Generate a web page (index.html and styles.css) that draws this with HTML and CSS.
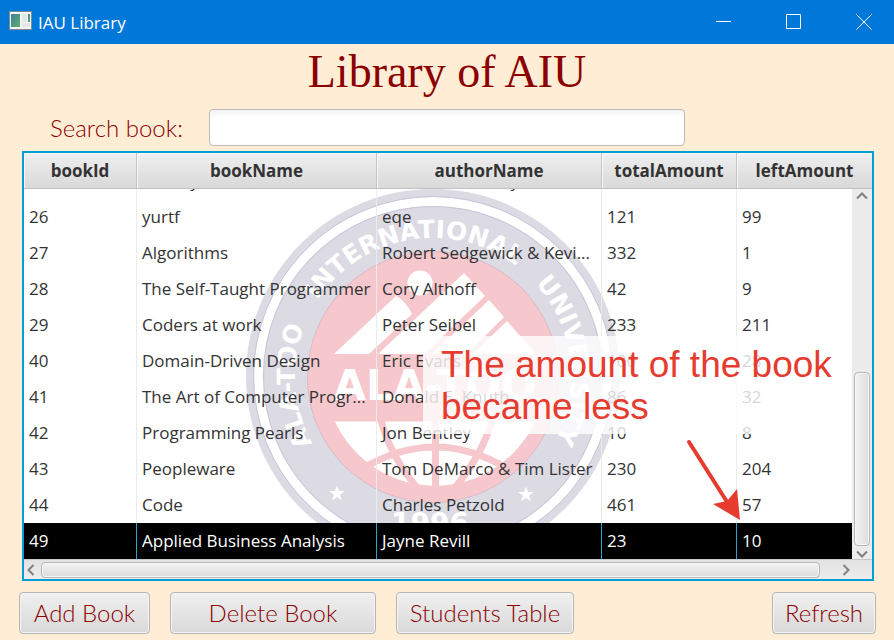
FILE: index.html
```html
<!DOCTYPE html>
<html lang="en">
<head>
<meta charset="utf-8">
<title>IAU Library</title>
<link rel="stylesheet" href="styles.css">
</head>
<body>
<div class="window">
  <header class="titlebar">
    <svg class="app-icon" width="23" height="19" viewBox="0 0 23 19" aria-hidden="true">
      <defs><linearGradient id="pane" x1="0" y1="0" x2="1" y2="1"><stop offset="0" stop-color="#3f7f9c"/><stop offset="1" stop-color="#5fb06c"/></linearGradient></defs>
      <rect x="0" y="0" width="23" height="19" fill="#7d8b94"/>
      <rect x="1" y="1" width="21" height="17" fill="#f4f4f4"/>
      <rect x="2" y="3" width="9" height="13" fill="url(#pane)"/>
      <rect x="13" y="3" width="5" height="8" fill="#e2e6e4"/>
      <rect x="19" y="3" width="2" height="8" fill="url(#pane)"/>
      <rect x="13" y="12" width="8" height="4" fill="#e6e6e6"/>
    </svg>
    <span class="titlebar-text">IAU Library</span>
    <div class="controls">
      <button type="button" aria-label="Minimize"><svg width="16" height="16" viewBox="0 0 16 16"><path d="M0 7.500H15"/></svg></button>
      <button type="button" aria-label="Maximize"><svg width="16" height="16" viewBox="0 0 16 16"><path d="M.5 .5H14.500V14.500H.5Z"/></svg></button>
      <button type="button" aria-label="Close"><svg width="16" height="16" viewBox="0 0 16 16"><path d="M.5 .5L15.500 15.500M15.500 .5L.5 15.500"/></svg></button>
    </div>
  </header>

  <main>
    <h1>Library of AIU</h1>
    <div class="search">
      <label for="search">Search book:</label>
      <input id="search" type="text">
    </div>

    <div class="table-view">
      <svg class="emblem" width="374" height="374" viewBox="246 189 374 374" aria-hidden="true">
        <defs><path id="ring" d="M327.300 464.700A138 138 0 1 1 538.700 464.700"/></defs>
        <circle cx="433" cy="376" r="187" fill="#dcdae3"/>
        <circle cx="433" cy="376" r="174.500" fill="none" stroke="#fff" stroke-width="9"/>
        <circle cx="433" cy="376" r="179.500" fill="none" stroke="#c9c7d6"/>
        <circle cx="433" cy="376" r="169.500" fill="none" stroke="#c9c7d6"/>
        <circle cx="433" cy="377" r="125.500" fill="#f6c8cd" stroke="#d8bcc8"/>
        <text class="ring-text"><textPath href="#ring" startOffset="13.800%">ALA-TOO</textPath></text>
        <text class="ring-text"><textPath href="#ring" startOffset="46.200%">INTERNATIONAL</textPath></text>
        <text class="ring-text"><textPath href="#ring" startOffset="81.900%">UNIVERSITY</textPath></text>
        <g fill="#fff">
          <circle cx="420" cy="283" r="12.500"/>
          <path d="M334 354L396 296Q406 301 412 314L369 354Z"/>
          <path d="M378 354L464 273L485 296L424 354Z"/>
          <path d="M432 354L489 300L504 317L467 354Z"/>
          <path d="M473 354L507 321L536 354Z"/>
          <path d="M335 421.500H535A110 110 0 0 1 335 421.500Z"/>
        </g>
        <path d="M435.500 421V490M381 420Q390 456 419 490M492 420Q482 456 453 490M362 469Q435 425 508 469" fill="none" stroke="#f6c8cd" stroke-width="7"/>
        <text class="emblem-name" x="435" y="400">ALA-TOO</text>
        <g fill="#fff">
          <path id="star" d="M337 485.500L339 491L345 491L340 494.500L342 500.500L337 497L332 500.500L334 494.500L329 491L335 491Z"/>
          <use href="#star" x="189" y="1"/>
        </g>
        <text class="emblem-year" x="430" y="533">1996</text>
      </svg>

      <table>
        <colgroup><col class="c-id"><col class="c-book"><col class="c-author"><col class="c-total"><col class="c-left"></colgroup>
        <thead>
          <tr><th>bookId</th><th>bookName</th><th>authorName</th><th>totalAmount</th><th>leftAmount</th></tr>
        </thead>
        <tbody>
          <tr class="scrolled"><td></td><td><div class="peek"><span>History</span></div></td><td><div class="peek"><span>Thomas Kennedy</span></div></td><td></td><td></td></tr>
          <tr><td>26</td><td>yurtf</td><td>eqe</td><td>121</td><td>99</td></tr>
          <tr><td>27</td><td>Algorithms</td><td>Robert Sedgewick &amp; Kevi...</td><td>332</td><td>1</td></tr>
          <tr><td>28</td><td>The Self-Taught Programmer</td><td>Cory Althoff</td><td>42</td><td>9</td></tr>
          <tr><td>29</td><td>Coders at work</td><td>Peter Seibel</td><td>233</td><td>211</td></tr>
          <tr><td>40</td><td>Domain-Driven Design</td><td>Eric Evans</td><td>100</td><td>28</td></tr>
          <tr><td>41</td><td>The Art of Computer Progr...</td><td>Donald E. Knuth</td><td>86</td><td>32</td></tr>
          <tr><td>42</td><td>Programming Pearls</td><td>Jon Bentley</td><td>10</td><td>8</td></tr>
          <tr><td>43</td><td>Peopleware</td><td>Tom DeMarco &amp; Tim Lister</td><td>230</td><td>204</td></tr>
          <tr><td>44</td><td>Code</td><td>Charles Petzold</td><td>461</td><td>57</td></tr>
          <tr class="selected"><td>49</td><td>Applied Business Analysis</td><td>Jayne Revill</td><td>23</td><td>10</td></tr>
        </tbody>
      </table>

      <div class="vscroll" aria-hidden="true">
        <svg width="12" height="8" viewBox="0 0 12 8"><path d="M1 6.500L6 1.500L11 6.500"/></svg>
        <div class="vtrack"><div class="thumb"></div></div>
        <svg width="12" height="8" viewBox="0 0 12 8"><path d="M1 1.500L6 6.500L11 1.500"/></svg>
      </div>
      <div class="hscroll" aria-hidden="true">
        <svg width="8" height="12" viewBox="0 0 8 12"><path d="M6.500 1L1.500 6L6.500 11"/></svg>
        <div class="htrack"><div class="thumb"></div></div>
        <svg width="8" height="12" viewBox="0 0 8 12"><path d="M1.500 1L6.500 6L1.500 11"/></svg>
      </div>

      <p class="note">The amount of the book<br>became less</p>
      <svg class="arrow" width="60" height="90" viewBox="685 435 60 90" aria-hidden="true">
        <path d="M689 442L729 505" stroke="#e63b2e" stroke-width="4" stroke-linecap="round"/>
        <path d="M740 520L713 504L727 501L737 489Z" fill="#e63b2e"/>
      </svg>
    </div>

    <div class="actions">
      <button type="button" class="add">Add Book</button>
      <button type="button" class="delete">Delete Book</button>
      <button type="button" class="students">Students Table</button>
      <button type="button" class="refresh">Refresh</button>
    </div>
  </main>
</div>
</body>
</html>
```
FILE: styles.css
```css
* { box-sizing: border-box; }

body {
  margin: 0;
  background: #ffeed5;
  font-family: "Open Sans", "Noto Sans", sans-serif;
  color: #333;
}

.window { min-height: 100vh; }

.titlebar {
  display: flex;
  align-items: center;
  height: 44px;
  padding-left: 9px;
  background: #0078d9;
  color: #fff;
}

.app-icon { margin-bottom: 3px; }

.titlebar-text { margin-left: 6px; font-size: 17px; }

.controls {
  display: flex;
  gap: 24px;
  margin-left: auto;
  padding-right: 7px;
}

.controls button {
  display: flex;
  align-items: center;
  justify-content: center;
  width: 46px;
  height: 44px;
  padding: 0;
  border: 0;
  background: none;
}

.controls path { fill: none; stroke: #fff; }

h1 {
  margin: 0;
  font: 46px/56px "Liberation Serif", serif;
  color: #8b0000;
  text-align: center;
}

.search {
  display: flex;
  align-items: center;
  gap: 24px;
  padding: 9px 50px 5px;
}

.search label {
  font: 300 24px/28px Lato, sans-serif;
  color: #8b0000;
  flex: 0 0 135px;
  white-space: nowrap;
}

.search input {
  flex: 0 1 476px;
  min-width: 0;
  height: 37px;
  padding: 4px 10px;
  border: 1px solid #bcbcbc;
  border-radius: 4px;
  background: linear-gradient(#f2f2f2, #fff 8px);
  font: inherit;
  font-size: 18px;
}

.table-view {
  position: relative;
  margin: 0 20px 0 22px;
  border: 2px solid #039ed3;
  background: #fff;
  overflow: hidden;
}

.emblem { position: absolute; left: 222px; top: 36px; }

.emblem text { fill: #fff; font-family: "DejaVu Sans", sans-serif; font-weight: bold; text-anchor: middle; }
.emblem .ring-text { font-size: 25px; }
.emblem .emblem-name { font-size: 42px; }
.emblem .emblem-year { font-size: 28px; }

table {
  position: relative;
  width: 100%;
  table-layout: fixed;
  border-collapse: separate;
  border-spacing: 0;
  font-size: 17px;
  line-height: 24px;
}

.c-id { width: 113px; }
.c-book { width: 240px; }
.c-author { width: 225px; }
.c-total { width: 135px; }

th {
  height: 36px;
  padding: 0;
  border-right: 1px solid #c4c4c4;
  border-bottom: 1px solid #c0c0c0;
  background: linear-gradient(#efefef, #d9d9d9);
  box-shadow: inset 1px 1px 0 #f8f8f8;
  font-weight: bold;
}

td {
  height: 36px;
  padding: 0 0 0 5px;
  border-right: 1px solid #ebebeb;
  white-space: nowrap;
}

th:last-child, td:last-child { border-right: 0; }

.scrolled td { height: 10px; line-height: 36px; }
.peek { display: flex; align-items: flex-end; height: 10px; overflow: hidden; }

.selected td { background: #000; color: #fff; border-right-color: #2ba3d0; }

.vscroll {
  position: absolute;
  top: 36px;
  right: 0;
  bottom: 20px;
  width: 20px;
  display: flex;
  flex-direction: column;
  align-items: center;
  gap: 4px;
  padding: 3px 0 1px;
  background: #ececec;
}

.vtrack {
  flex: 1;
  display: flex;
  flex-direction: column;
  justify-content: flex-end;
  width: 16px;
}

.thumb {
  border: 1px solid #b5b5b5;
  border-radius: 4px;
  background: linear-gradient(#f3f3f3, #dcdcdc);
  box-shadow: inset 0 0 0 1px #f8f8f8;
}

.vtrack .thumb { height: 51%; background: linear-gradient(90deg, #f3f3f3, #dcdcdc); }

.vscroll path, .hscroll path { fill: none; stroke: #808080; stroke-width: 2; }

.hscroll {
  position: relative;
  display: flex;
  align-items: center;
  gap: 6px;
  height: 20px;
  padding: 0 22px 0 3px;
  border-top: 1px solid #c8c8c8;
  background: linear-gradient(#e2e2e2, #ededed);
}

.htrack { flex: 1; }
.htrack .thumb { width: 98%; height: 16px; }

.note {
  position: absolute;
  left: 399px;
  top: 183px;
  margin: 0;
  padding: 8px 17px 6px 18px;
  background: rgba(255, 255, 255, .8);
  font: 37px/42px "Liberation Sans", sans-serif;
  color: #e63b2e;
  white-space: nowrap;
}

.arrow { position: absolute; left: 661px; top: 282px; }

.actions {
  display: flex;
  gap: 20px;
  padding: 11px 18px 6px 19px;
}

.actions button {
  height: 42px;
  padding: 0;
  border: 1px solid #b5b5b5;
  border-radius: 4px;
  background: linear-gradient(#f0f0f0, #d9d9d9);
  box-shadow: inset 0 0 0 1px #f4f4f4;
  font: 300 24px/28px Lato, sans-serif;
  color: #8b0000;
}

.add { width: 131px; }
.delete { width: 206px; }
.students { width: 178px; }
.refresh { width: 104px; margin-left: auto; }
```
